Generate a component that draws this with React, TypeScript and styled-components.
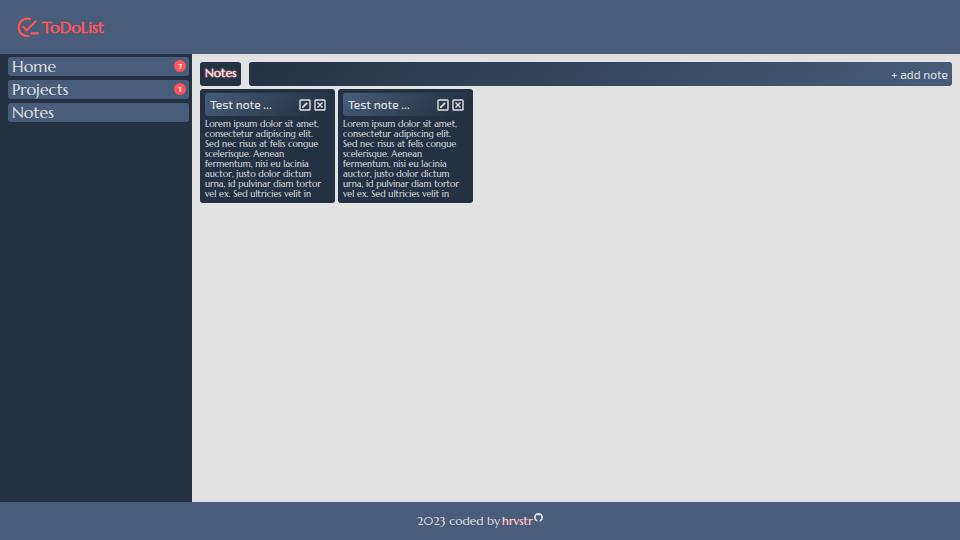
import React from "react";
import styled, { createGlobalStyle } from "styled-components";

const color = {
  navy: "#243142",
  blue: "#475d7b",
  page: "#e2e2e2",
  text: "#e2e2e2",
  red: "#fe5558",
};

const uiFont = `"Exo 2", "Open Sans", sans-serif`;

const GlobalStyle = createGlobalStyle`
  * { box-sizing: border-box; }
  body {
    margin: 0;
    background: ${color.page};
    color: ${color.text};
    font-family: Marcellus, Lato, sans-serif;
  }
  button { font: inherit; color: inherit; border: 0; background: none; padding: 0; cursor: pointer; }
  a { color: inherit; text-decoration: none; }
`;

const Page = styled.div`
  min-height: 100vh;
  display: grid;
  grid-template-columns: 20% 1fr;
  grid-template-rows: 54px 1fr 38px;
`;

const Header = styled.header`
  grid-column: 1 / -1;
  display: flex;
  align-items: center;
  padding: 0 17px;
  background: ${color.blue};
`;

const Brand = styled.a`
  display: flex;
  align-items: center;
  gap: 3px;
  && { color: ${color.red}; }
  font-size: 16px;
  font-weight: 700;
  line-height: 22px;
`;

const Sidebar = styled.nav`
  padding: 3px 3px 3px 8px;
  background: ${color.navy};
`;

const NavList = styled.ul`
  list-style: none;
  margin: 0;
  padding: 0;
  display: grid;
  gap: 4px;
`;

const NavLink = styled.a`
  display: flex;
  align-items: center;
  justify-content: space-between;
  height: 19px;
  padding: 0 3px 1px 4px;
  border-radius: 3px;
  background: ${color.blue};
  font-size: 16px;
  line-height: 18px;
`;

const Badge = styled.span`
  display: grid;
  place-items: center;
  width: 12px;
  height: 12px;
  border-radius: 50%;
  background: ${color.red};
  font-family: ${uiFont};
  font-size: 8px;
  font-weight: 700;
  line-height: 12px;
`;

const Main = styled.main`
  padding: 8px;
  background: ${color.page};
`;

const TitleBar = styled.div`
  display: flex;
  gap: 8px;
  height: 24px;
`;

const Title = styled.h1`
  margin: 0;
  padding: 0 5px;
  border-radius: 3px;
  background: ${color.navy};
  font-size: 12px;
  font-weight: 700;
  line-height: 22px;
  text-shadow: 0 0 2px ${color.red};
`;

const Toolbar = styled.div`
  flex: 1;
  display: flex;
  justify-content: flex-end;
  padding: 0 4px;
  border-radius: 3px;
  background: linear-gradient(135deg, ${color.navy}, ${color.blue});
`;

const AddButton = styled.button`
  && {
    font-family: ${uiFont};
    font-size: 12px;
    line-height: 24px;
  }
`;

const NoteGrid = styled.section`
  display: flex;
  flex-wrap: wrap;
  gap: 3px;
  margin-top: 3px;
`;

const NoteCard = styled.article`
  width: 135px;
  padding: 4px 5px;
  border-radius: 3px;
  background: ${color.navy};
`;

const NoteHeader = styled.header`
  display: flex;
  align-items: center;
  gap: 3px;
  height: 23px;
  padding: 0 4px 0 5px;
  border-radius: 3px;
  background: linear-gradient(135deg, ${color.blue}, ${color.navy} 90%);
`;

const NoteTitle = styled.h2`
  flex: 1;
  margin: 0;
  font-family: ${uiFont};
  font-size: 12px;
  font-weight: 500;
  line-height: 23px;
  white-space: nowrap;
`;

const IconButton = styled.button`
  display: grid;
  place-items: center;
  width: 12px;
  height: 12px;
`;

const NoteText = styled.p`
  margin: 3px 0 0;
  font-size: 9px;
  line-height: 10px;
  white-space: pre;
`;

const Footer = styled.footer`
  grid-column: 1 / -1;
  display: flex;
  align-items: center;
  justify-content: center;
  gap: 2px;
  background: ${color.blue};
  font-size: 12px;
  line-height: 16px;
`;

const AuthorLink = styled.a`
  display: flex;
  align-items: flex-start;
  gap: 1px;
  text-shadow: 0 0 2px ${color.red};
`;

const Logo = () => (
  <svg width="22" height="22" viewBox="0 -1 22 22" fill="none" stroke="currentColor" strokeWidth="2.3" aria-hidden="true">
    <path d="M14 2.4A8.7 8.7 0 1 0 12.3 18.8" />
    <path d="M5.800 9.200l4 4L19 3.800" />
    <path d="M13.600 16.300h8.200" />
  </svg>
);

const EditIcon = () => (
  <svg width="12" height="12" viewBox="0 0 12 12" fill="none" stroke="currentColor" aria-hidden="true">
    <rect x="1" y="1" width="10" height="10" rx="0.8" strokeWidth="1.4" />
    <path d="M3.6 8.4L8.1 3.9" strokeWidth="1.8" />
    <path d="M3 9V7.4L4.6 9z" fill="currentColor" stroke="none" />
  </svg>
);

const CloseIcon = () => (
  <svg width="12" height="12" viewBox="0 0 12 12" fill="none" stroke="currentColor" strokeWidth="1.4" aria-hidden="true">
    <rect x="1" y="1" width="10" height="10" rx="0.8" />
    <path d="M3.5 3.5l5 5M8.5 3.5l-5 5" />
  </svg>
);

const GithubMark = () => (
  <svg width="9" height="9" viewBox="0 0 16 16" fill="currentColor" aria-hidden="true">
    <path d="M8 0a8 8 0 0 0-3.2 15.3c.8.3 1.2-.1 1.2-.7v-2.2c-1.9-.5-3-1.8-3-4.2 0-1 .3-1.9.9-2.6-.2-.8-.1-1.7.2-2.1.8 0 1.5.4 2.1.9 1.1-.3 2.5-.3 3.6 0 .6-.5 1.3-.9 2.1-.9.3.4.4 1.3.2 2.1.6.7.9 1.6.9 2.6 0 2.4-1.1 3.7-3 4.2v2.2c0 .6.4 1 1.2.7A8 8 0 0 0 8 0z" />
  </svg>
);

const links = [
  { label: "Home", count: 7 },
  { label: "Projects", count: 1 },
  { label: "Notes", count: 0 },
];

const lorem = `Lorem ipsum dolor sit amet,
consectetur adipiscing elit.
Sed nec risus at felis congue
scelerisque. Aenean
fermentum, nisi eu lacinia
auctor, justo dolor dictum
urna, id pulvinar diam tortor
vel ex. Sed ultricies velit in`;

const notes = [
  { id: 1, title: "Test note ...", text: lorem },
  { id: 2, title: "Test note ...", text: lorem },
];

export default function App() {
  return (
    <>
      <GlobalStyle />
      <Page>
        <Header>
          <Brand href="#home">
            <Logo />
            ToDoList
          </Brand>
        </Header>
        <Sidebar>
          <NavList>
            {links.map(({ label, count }) => (
              <li key={label}>
                <NavLink href={`#${label.toLowerCase()}`}>
                  {label}
                  {count > 0 && <Badge>{count}</Badge>}
                </NavLink>
              </li>
            ))}
          </NavList>
        </Sidebar>
        <Main>
          <TitleBar>
            <Title>Notes</Title>
            <Toolbar>
              <AddButton type="button">+ add note</AddButton>
            </Toolbar>
          </TitleBar>
          <NoteGrid>
            {notes.map((note) => (
              <NoteCard key={note.id}>
                <NoteHeader>
                  <NoteTitle>{note.title}</NoteTitle>
                  <IconButton type="button" aria-label="Edit note">
                    <EditIcon />
                  </IconButton>
                  <IconButton type="button" aria-label="Delete note">
                    <CloseIcon />
                  </IconButton>
                </NoteHeader>
                <NoteText>{note.text}</NoteText>
              </NoteCard>
            ))}
          </NoteGrid>
        </Main>
        <Footer>
          <span>2023 coded by</span>
          <AuthorLink href="#author">
            hrvstr
            <GithubMark />
          </AuthorLink>
        </Footer>
      </Page>
    </>
  );
}
